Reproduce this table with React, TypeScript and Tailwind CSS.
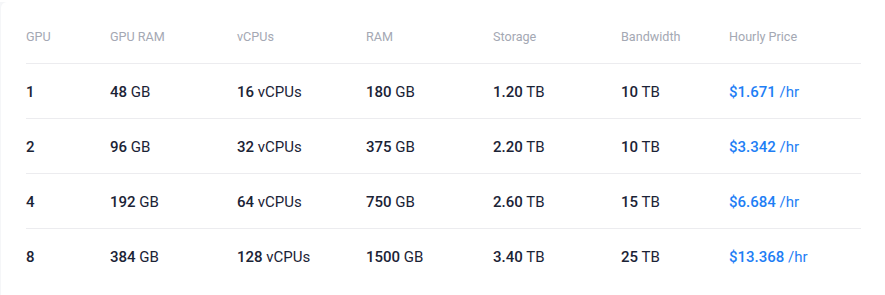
const headers = ['GPU', 'GPU RAM', 'vCPUs', 'RAM', 'Storage', 'Bandwidth', 'Hourly Price'];

const rows = [
    { gpu: '1', gpuRam: '48', vcpu: '16', ram: '180', storage: '1.20', bw: '10', price: '$1.671' },
    { gpu: '2', gpuRam: '96', vcpu: '32', ram: '375', storage: '2.20', bw: '10', price: '$3.342' },
    { gpu: '4', gpuRam: '192', vcpu: '64', ram: '750', storage: '2.60', bw: '15', price: '$6.684' },
    { gpu: '8', gpuRam: '384', vcpu: '128', ram: '1500', storage: '3.40', bw: '25', price: '$13.368' },
];

const cols = 'grid grid-cols-[84px_127px_129px_127px_128px_108px_132px]';

function Val({ n, unit }: { n: string; unit: string }) {
    return (
        <span>
            <span className="font-medium">{n}</span> {unit}
        </span>
    );
}

export default function App() {
    return (
        <div className="min-h-screen bg-[#f5f6f8] font-['Roboto',sans-serif]">
            <div className="ml-[1px] mt-[2px] min-h-[293px] rounded-tl-md bg-white pl-[25px] pt-[10px]">
                <div className="w-[835px]">
                    {/* Header */}
                    <div className={`${cols} h-[52px] items-center border-b border-[#ececef] text-[12.6px] text-[#a4a8b3]`}>
                        {headers.map((h) => (
                            <div key={h}>{h}</div>
                        ))}
                    </div>

                    {rows.map((r, i) => (
                        <div
                            key={r.gpu}
                            className={`${cols} h-[55px] items-center pt-[2px] text-[15px] text-[#1b2336] ${i < rows.length - 1 ? 'border-b border-[#ececef]' : ''}`}
                        >
                            <div className="font-medium">{r.gpu}</div>
                            <Val n={r.gpuRam} unit="GB" />
                            <Val n={r.vcpu} unit="vCPUs" />
                            <Val n={r.ram} unit="GB" />
                            <Val n={r.storage} unit="TB" />
                            <Val n={r.bw} unit="TB" />
                            <div className="text-[#1e7ef5]">
                                <span className="font-medium">{r.price}</span> /hr
                            </div>
                        </div>
                    ))}
                </div>
            </div>
        </div>
    );
}
